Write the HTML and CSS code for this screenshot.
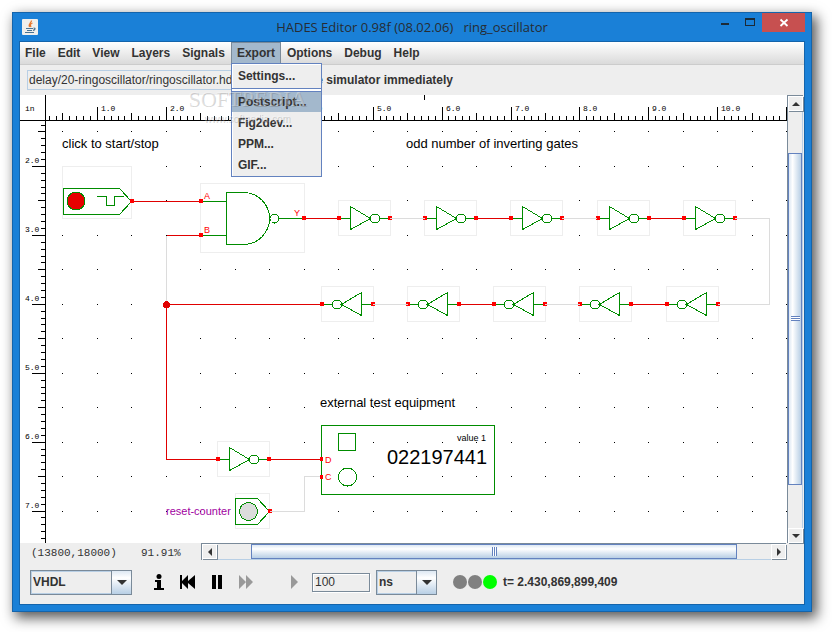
FILE: index.html
```html
<!DOCTYPE html>
<html lang="en">
<head>
<meta charset="utf-8">
<title>HADES Editor</title>
<link rel="stylesheet" href="styles.css">
</head>
<body>
<div class="window">
  <header class="titlebar">
    <svg class="app-icon" width="16" height="16" viewBox="0 0 16 16" aria-hidden="true">
      <rect width="16" height="16" rx="1" fill="#f1efec"/>
      <path d="M9.5 1.500C9.500 4 6 4.500 7.500 8M10.500 4C8 5 8 6 9 8" fill="none" stroke="#e8762c" stroke-width="1.300"/>
      <path d="M4 9.500h7M5 11.500h5M3 13.500h9M11.500 9c2.500 0 1.500 2-.5 2.500" fill="none" stroke="#4a7393" stroke-width="1.200"/>
    </svg>
    <h1 class="title">HADES Editor 0.98f (08.02.06) &nbsp; ring_oscillator</h1>
    <div class="window-buttons">
      <button class="window-button" aria-label="Minimize"><svg width="10" height="10" viewBox="0 0 10 10"><path d="M1 6h8v2H1z" fill="#1c2a36"/></svg></button>
      <button class="window-button" aria-label="Maximize"><svg width="10" height="10" viewBox="0 0 10 10"><path d="M0 1h10v8H0zM1 3v5h8V3z" fill="#1c2a36" fill-rule="evenodd"/></svg></button>
      <button class="window-button close" aria-label="Close"><svg width="10" height="10" viewBox="0 0 10 10"><path d="M1.500 1.500l7 6.500M8.500 1.500l-7 6.500" stroke="#fff" stroke-width="1.800"/></svg></button>
    </div>
  </header>
  <main class="client">
    <nav class="menubar">
      <button class="menu">File</button>
      <button class="menu">Edit</button>
      <button class="menu">View</button>
      <button class="menu">Layers</button>
      <button class="menu">Signals</button>
      <div class="menu-holder">
        <button class="menu open" aria-expanded="true">Export</button>
        <div class="popup">
          <button class="item first">Settings...</button>
          <div class="rule"></div>
          <button class="item selected">Postscript...</button>
          <button class="item">Fig2dev...</button>
          <button class="item">PPM...</button>
          <button class="item">GIF...</button>
        </div>
      </div>
      <button class="menu">Options</button>
      <button class="menu">Debug</button>
      <button class="menu">Help</button>
    </nav>
    <div class="toolbar">
      <input class="path" type="text" aria-label="Design path" value="delay/20-ringoscillator/ringoscillator.hds">
      <span>the simulator immediately</span>
      <div class="watermark" aria-hidden="true">
        <span class="watermark-name">SOFTPEDIA</span>
        <span class="watermark-site">www.softpedia.com</span>
      </div>
    </div>
    <div class="workspace">
      <svg class="schematic" aria-label="Ring oscillator schematic">
        <defs>
          <g id="inverter">
            <path class="box" d="M.5-17.500h52v35H.5z"/>
            <path class="part" d="M2 .5h10.500M12.500-11.500v23L32.500.5zM41 .5h10"/>
            <circle class="part" cx="37" cy=".5" r="4.500"/>
            <path class="pin" d="M-1-2h4v4h-4zM50-2h4v4h-4z"/>
          </g>
        </defs>
        <g transform="translate(-20 -95)">
          <path id="grid" class="dots"/>
          <path id="ruler" class="ruler"/>
          <g id="numbers" class="numbers"></g>
          <text class="numbers" x="25" y="111">in</text>

          <path class="wire" d="M131 201.500h70M166.500 235.500h34M304 218.500h34M476 218.500h35M649 218.500h35M166 304.500h155M459 304.500h35M631 304.500h35M166.500 304v155.500H218M270 459.500h51"/>

          <path class="box" d="M62.500 166.500h69v52h-69z"/>
          <path class="part" d="M63.500 188.500h56l12 13-12 13h-56zM97 196.500h9.500v9h8v-9h9.500"/>
          <circle class="part lamp-on" cx="76" cy="201" r="9"/>

          <path class="box" d="M200.500 183.500h104v69h-104z"/>
          <path class="part" d="M203 201.500h23M203 235.500h23M226.500 192.500h17a26 26 0 0 1 0 52h-17zM279 218.500h23"/>
          <circle class="part" cx="274.500" cy="218.500" r="4.500"/>
          <g class="pin-name"><text x="204" y="199">A</text><text x="204" y="233">B</text><text x="294" y="216">Y</text></g>

          <use href="#inverter" x="338" y="218"/>
          <use href="#inverter" x="424" y="218"/>
          <use href="#inverter" x="510" y="218"/>
          <use href="#inverter" x="597" y="218"/>
          <use href="#inverter" x="683" y="218"/>
          <g transform="scale(-1 1)">
            <use href="#inverter" x="-374" y="304"/>
            <use href="#inverter" x="-460" y="304"/>
            <use href="#inverter" x="-546" y="304"/>
            <use href="#inverter" x="-632" y="304"/>
            <use href="#inverter" x="-719" y="304"/>
          </g>
          <use href="#inverter" x="217" y="459"/>

          <path class="part" d="M321.500 425.500h173v69h-173zM338.500 433.500h17v17h-17z"/>
          <circle class="part" cx="347.500" cy="477" r="9"/>
          <text class="value-name" x="457" y="441">value 1</text>
          <text class="value" x="387" y="464">022197441</text>
          <g class="pin-name"><text x="325" y="463">D</text><text x="325" y="480">C</text></g>

          <path class="box" d="M235.500 493.500h34v35h-34z"/>
          <path class="part" d="M235.500 498.500h22l12 13-12 13h-22z"/>
          <circle class="part lamp-off" cx="248.500" cy="511.500" r="9"/>

          <path class="pin" d="M130 199h4v4h-4zM199 199h4v4h-4zM199 233h4v4h-4zM302 216h4v4h-4zM320 457h3v4h-3zM320 475h3v4h-3zM268 509h4v4h-4z"/>
          <circle class="pin node" cx="166.500" cy="304.500" r="3.500"/>
          <path class="wire idle" d="M166.500 236v65M390 218.500h35M562 218.500h35M735 218.500h34.500v86H718M373 304.500h35M545 304.500h35M270 511.500h34.500v-35H320"/>

          <g class="note">
            <text x="62" y="148">click to start/stop</text>
            <text x="406" y="148">odd number of inverting gates</text>
            <text x="320" y="407">external test equipment</text>
          </g>
          <text class="reset" x="166" y="515">reset-counter</text>
        </g>
      </svg>
      <div class="scroll vertical">
        <button class="arrow" aria-label="Scroll up"><svg width="8" height="4" viewBox="0 0 8 4"><path d="M0 4l4-4 4 4z"/></svg></button>
        <div class="track"><div class="thumb"><span class="grip"></span></div></div>
        <button class="arrow" aria-label="Scroll down"><svg width="8" height="4" viewBox="0 0 8 4"><path d="M0 0l4 4 4-4z"/></svg></button>
      </div>
    </div>
    <div class="status">
      <span class="position">(13800,18000)</span>
      <span class="zoom">91.91%</span>
      <div class="scroll horizontal">
        <button class="arrow" aria-label="Scroll left"><svg width="4" height="8" viewBox="0 0 4 8"><path d="M4 0L0 4l4 4z"/></svg></button>
        <div class="track"><div class="thumb"><span class="grip"></span></div></div>
        <button class="arrow" aria-label="Scroll right"><svg width="4" height="8" viewBox="0 0 4 8"><path d="M0 0l4 4-4 4z"/></svg></button>
      </div>
    </div>
    <div class="controls">
      <div class="combo language">
        <select aria-label="Language"><option>VHDL</option></select>
        <span class="drop"><svg width="10" height="5" viewBox="0 0 10 5"><path d="M0 0h10L5 5z"/></svg></span>
      </div>
      <div class="playback">
        <button class="icon" aria-label="Info"><svg width="20" height="16" viewBox="0 0 20 16"><circle cx="10" cy="2.500" r="2.500"/><path d="M6 6h6v8h3v2H5v-2h3V8H6z"/></svg></button>
        <button class="icon" aria-label="Rewind"><svg width="20" height="16" viewBox="0 0 20 16"><path d="M2 1h2v6l6-6v6l7-6v14l-7-6v6L4 9v6H2z"/></svg></button>
        <button class="icon" aria-label="Pause"><svg width="20" height="16" viewBox="0 0 20 16"><path d="M5 1h4v14H5zM11 1h4v14h-4z"/></svg></button>
        <button class="icon off" aria-label="Run"><svg width="20" height="16" viewBox="0 0 20 16"><path d="M3 1l7 7-7 7zM10 1l7 7-7 7z"/></svg></button>
      </div>
      <button class="icon off" aria-label="Step"><svg width="20" height="16" viewBox="0 0 20 16"><path d="M6 1l7 7-7 7z"/></svg></button>
      <input class="amount" type="text" aria-label="Step time" value="100">
      <div class="combo unit">
        <select aria-label="Time unit"><option>ns</option></select>
        <span class="drop"><svg width="10" height="5" viewBox="0 0 10 5"><path d="M0 0h10L5 5z"/></svg></span>
      </div>
      <div class="lights"><span class="light"></span><span class="light"></span><span class="light go"></span></div>
      <output class="time">t= 2.430,869,899,409</output>
    </div>
  </main>
</div>
<script src="ruler.js"></script>
</body>
</html>
```
FILE: styles.css
```css
* {
  box-sizing: border-box;
}

body {
  margin: 0;
  min-height: 100vh;
  padding: 12px 20px 20px 12px;
  display: flex;
  background: #fff;
  color: #333;
  font: bold 12px/16px "Liberation Sans", sans-serif;
}

button,
input,
select {
  margin: 0;
  padding: 0;
  border: 0;
  border-radius: 0;
  background: none;
  color: inherit;
  font: inherit;
  appearance: none;
}

.window {
  flex: 1;
  min-width: 0;
  display: flex;
  flex-direction: column;
  padding: 0 6px 6px;
  border: 1px solid #1464ab;
  background: #1a80d7;
  box-shadow: 4px 5px 12px 1px rgba(0, 0, 0, 0.65);
}

/* title bar */

.titlebar {
  display: grid;
  grid-template-columns: 128px 1fr 128px;
  height: 28px;
}

.app-icon {
  margin: 6px 0 0 3px;
}

.title {
  margin: 4px 0 0;
  color: #262c33;
  font: 13px/20px "Open Sans", sans-serif;
  text-align: center;
  white-space: nowrap;
}

.window-buttons {
  display: flex;
  justify-content: flex-end;
  align-items: flex-start;
}

.window-button {
  display: grid;
  place-items: center;
  width: 25px;
  height: 18px;
}

.window-button.close {
  width: 43px;
  height: 19px;
  background: #c75050;
}

/* client area */

.client {
  flex: 1;
  min-height: 0;
  display: flex;
  flex-direction: column;
  border: 1px solid #1464ab;
  background: #eee;
}

.menubar {
  display: flex;
  height: 23px;
  padding-left: 5px;
  border-bottom: 1px solid #ccc;
  background: linear-gradient(#fff, #dadada);
}

.menu {
  height: 22px;
  padding: 0 6px;
  white-space: nowrap;
}

.menu:first-child {
  padding-left: 0;
}

.menu.open {
  border: solid #7a8a99;
  border-width: 1px 1px 0;
  padding: 0 5px 1px;
  background: #a3b8cc;
}

.menu-holder {
  position: relative;
}

.popup {
  position: absolute;
  z-index: 2;
  top: 21px;
  left: 0;
  width: 91px;
  padding-bottom: 1px;
  border: 1px solid #6382bf;
  background: #eee;
  box-shadow: inset 1px 1px #fff;
}

.item {
  display: block;
  width: 100%;
  height: 21px;
  padding: 0 6px;
  text-align: left;
}

.item.first {
  height: 24px;
}

.item.selected {
  height: 20px;
  background: #a3b8cc;
}

.rule {
  height: 4px;
  border: solid #6382bf;
  border-width: 1px 0;
  background: #fff;
}

.toolbar {
  position: relative;
  display: flex;
  align-items: center;
  gap: 8px;
  height: 30px;
  padding-left: 7px;
}

.path {
  width: 270px;
  height: 20px;
  padding: 0 1px;
  border: 1px solid #b8cfe5;
  font-weight: normal;
}

.watermark {
  position: absolute;
  z-index: 3;
  top: 22px;
  left: 166px;
  width: 122px;
  text-align: center;
  font-weight: normal;
  pointer-events: none;
}

.watermark span {
  display: block;
  white-space: nowrap;
}

.watermark-name {
  color: rgba(255, 255, 255, 0.3);
  font: 22px/24px "Liberation Serif", serif;
  text-shadow: 1px 1px rgba(90, 90, 90, 0.25);
}

.watermark-site {
  color: rgba(255, 255, 255, 0.3);
  font: 10px/16px "Liberation Sans", sans-serif;
  text-shadow: 1px 1px rgba(90, 90, 90, 0.25);
}

/* schematic */

.workspace {
  flex: 1;
  min-height: 0;
  display: flex;
}

.schematic {
  flex: 1;
  min-width: 0;
  height: auto;
  background: #fff;
  font-family: "Liberation Sans", sans-serif;
  font-weight: normal;
  shape-rendering: crispEdges;
}

.dots { fill: #000; }
.ruler { fill: none; stroke: #000; }
.numbers { fill: #000; font: 8px "Liberation Mono", monospace; }
.box { fill: #fff; stroke: #eee; }
.part { fill: none; stroke: #008c00; }
.lamp-on { fill: #e60000; }
.lamp-off { fill: #dcdcdc; }
.wire { fill: none; stroke: #e00000; }
.wire.idle { stroke: #dcdcdc; }
.pin { fill: #f00; }
.pin.node { fill: #e00000; }
.pin-name { fill: #f00; font-size: 9px; }
.value-name { fill: #000; font-size: 9px; }
.value { fill: #000; font-size: 20px; }
.note { fill: #000; font-size: 13px; }
.reset { fill: #a000a0; font-size: 11px; }

/* scroll bars */

.scroll {
  display: flex;
  border: solid #7a8a99;
  border-width: 1px 0 0 1px;
}

.vertical {
  flex-direction: column;
  width: 16px;
  margin-right: 1px;
}

.horizontal {
  flex: 1;
  height: 17px;
  margin-right: 18px;
}

.arrow {
  display: grid;
  place-items: center;
  width: 15px;
  height: 15px;
  border: 1px solid #fff;
  box-shadow: 1px 1px #7a8a99;
}

.arrow svg,
.drop svg {
  fill: #333;
}

.track {
  flex: 1;
  display: grid;
}

.vertical .track {
  grid-template-rows: 41fr 331fr 43fr;
  margin-top: 1px;
  border-right: 1px solid #b8cfe5;
}

.horizontal .track {
  grid-template-columns: 33fr 486fr 34fr;
  margin-left: 1px;
  border-bottom: 1px solid #b8cfe5;
}

.thumb {
  display: grid;
  place-items: center;
  border: 1px solid #6382bf;
}

.vertical .thumb {
  grid-row: 2;
  background: linear-gradient(90deg, #dde8f3, #fff 30%, #b8cfe5);
}

.horizontal .thumb {
  grid-column: 2;
  background: linear-gradient(#dde8f3, #fff 30%, #b8cfe5);
}

.vertical .grip {
  width: 9px;
  height: 5px;
  background: repeating-linear-gradient(#6382bf 0 1px, #fff 1px 2px);
}

.horizontal .grip {
  width: 5px;
  height: 9px;
  background: repeating-linear-gradient(90deg, #6382bf 0 1px, #fff 1px 2px);
}

/* status line */

.status {
  display: flex;
  height: 17px;
  padding-left: 11px;
  font: 11px/20px "Liberation Mono", monospace;
}

.position {
  width: 110px;
}

.zoom {
  width: 60px;
}

/* simulation controls */

.controls {
  display: flex;
  align-items: center;
  height: 44px;
  padding-left: 10px;
}

.combo {
  display: grid;
  grid-template-columns: 1fr 20px;
  height: 25px;
  border: 1px solid #7a8a99;
}

.language {
  width: 102px;
}

.unit {
  width: 61px;
  margin-left: 6px;
}

.combo select {
  grid-area: 1 / 1 / 2 / 3;
  width: 100%;
  padding-left: 1px;
  border: 1px solid #b8cfe5;
}

.drop {
  grid-area: 1 / 2;
  display: grid;
  place-items: center;
  border-left: 1px solid #7a8a99;
  background: linear-gradient(#dde8f3, #fff 30%, #b8cfe5);
  pointer-events: none;
}

.playback {
  display: flex;
  gap: 9px;
  margin: 0 29px 0 17px;
}

.icon {
  width: 20px;
  height: 16px;
  fill: #000;
}

.icon.off {
  fill: #999;
}

.icon svg {
  display: block;
}

.amount {
  width: 58px;
  height: 19px;
  margin-left: 7px;
  padding-left: 2px;
  border: 1px solid #7a8a99;
  box-shadow: 1px 1px #fff, inset 1px 1px #fff;
  font-weight: normal;
}

.lights {
  display: flex;
  gap: 1px;
  margin: 0 6px 0 16px;
}

.light {
  width: 14px;
  height: 14px;
  border-radius: 50%;
  background: #808080;
}

.light.go {
  background: #0f0;
}
```
FILE: ruler.js
```javascript
// Draws both rulers and the snap grid. One inch is 68.94 px on screen.
const INCH = 68.94;
const LEFT = 46;
const TOP = 121;
const ORIGIN = { x: 97.4 - INCH, y: 166.4 - 2 * INCH };
const svg = document.querySelector(".schematic");
const right = 20 + svg.clientWidth;
const bottom = 95 + svg.clientHeight;
const numbers = document.getElementById("numbers");

function label(x, y, inch) {
  const text = document.createElementNS("http://www.w3.org/2000/svg", "text");
  text.setAttribute("x", x);
  text.setAttribute("y", y);
  text.textContent = inch.toFixed(1);
  numbers.append(text);
}

function tickLength(n) {
  return n % 10 === 0 ? 13 : n % 5 === 0 ? 7 : 4;
}

let ruler = `M20 120.5H${right}M45.5 95V${bottom}M424.5 95v5`;
for (let n = 1; ; n++) {
  const x = Math.floor(ORIGIN.x + n * INCH / 10);
  if (x >= right) break;
  if (x < LEFT) continue;
  ruler += `M${x + 0.5} 120v${-tickLength(n)}`;
  if (n % 10 === 0 && x + 20 < right) label(x + 4, 111, n / 10);
}
for (let n = 1; ; n++) {
  const y = Math.floor(ORIGIN.y + n * INCH / 10);
  if (y >= bottom) break;
  if (y < TOP) continue;
  ruler += `M45 ${y + 0.5}h${-tickLength(n)}`;
  if (n % 10 === 0) label(25, y - 3, n / 10);
}
document.getElementById("ruler").setAttribute("d", ruler);

let dots = "";
for (let x = ORIGIN.x + INCH / 2; x < right; x += INCH / 2) {
  if (x < LEFT) continue;
  for (let y = ORIGIN.y + INCH / 2; y < bottom; y += INCH / 2) {
    if (y > TOP) dots += `M${Math.floor(x)} ${Math.floor(y)}h1v1h-1z`;
  }
}
document.getElementById("grid").setAttribute("d", dots);
```
